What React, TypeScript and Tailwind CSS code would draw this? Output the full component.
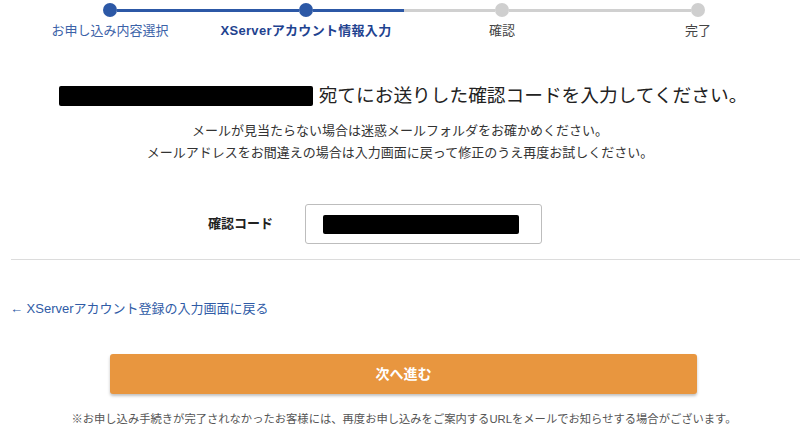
import React from "react";

const font = "font-['Liberation_Sans','Noto_Sans_CJK_JP',sans-serif]";

type Step = { label: string; left: string; right: string; dot: string; text: string };

const steps: Step[] = [
  { label: "お申し込み内容選択", left: "bg-transparent", right: "bg-[#2c58a6]", dot: "bg-[#2c58a6]", text: "text-[#3b62a8]" },
  { label: "XServerアカウント情報入力", left: "bg-[#2c58a6]", right: "bg-[#2c58a6]", dot: "bg-[#2c58a6]", text: "text-[#1f4390] font-bold tracking-[0.3px]" },
  { label: "確認", left: "bg-[#d0d0d0]", right: "bg-[#d0d0d0]", dot: "bg-[#cfcfcf]", text: "text-[#444]" },
  { label: "完了", left: "bg-[#d0d0d0]", right: "bg-transparent", dot: "bg-[#cfcfcf]", text: "text-[#444]" },
];

function Redacted({ className }: { className: string }) {
  return <span className={`inline-block bg-black rounded-[2px] blur-[0.4px] ${className}`} />;
}

export default function App() {
  return (
    <div className={`w-[800px] h-[438px] overflow-hidden bg-white ${font}`}>
      {/* ステップ */}
      <div className="grid grid-cols-4 w-[784px] ml-[12px] pt-[3px]">
        {steps.map((s) => (
          <div key={s.label} className="flex flex-col items-center">
            <div className="flex items-center w-full">
              <div className={`flex-1 h-[3px] ${s.left}`} />
              <div className={`w-[14px] h-[14px] rounded-full ${s.dot}`} />
              <div className={`flex-1 h-[3px] ${s.right}`} />
            </div>
            <div className={`mt-[5px] text-[13px] leading-[18px] whitespace-nowrap ${s.text}`}>{s.label}</div>
          </div>
        ))}
      </div>

      {/* 見出し */}
      <div className="mt-[44px] flex justify-center items-center gap-[6px] pl-[6px]">
        <Redacted className="w-[254px] h-[20px]" />
        <span className="text-[18.7px] leading-[24px] text-[#222]">宛てにお送りした確認コードを入力してください。</span>
      </div>

      <div className="mt-[12px] text-center text-[13px] leading-[22px] text-[#333]">
        <p>メールが見当たらない場合は迷惑メールフォルダをお確かめください。</p>
        <p>メールアドレスをお間違えの場合は入力画面に戻って修正のうえ再度お試しください。</p>
      </div>

      {/* 確認コード */}
      <div className="mt-[40px] flex items-center h-[40px]">
        <div className="w-[275px] pr-[2px] text-right text-[13px] font-bold text-[#222]">確認コード</div>
        <div className="ml-[30px] w-[237px] h-[40px] border border-[#bdbdbd] rounded-[3px] flex items-center pl-[17px]">
          <Redacted className="w-[196px] h-[19px]" />
        </div>
      </div>

      <div className="mt-[15px] ml-[11px] border-t border-[#dcdcdc]" />

      <div className="mt-[40px] pl-[10px] text-[13px] leading-[18px] text-[#2f5ba6]">
        ← XServerアカウント登録の入力画面に戻る
      </div>

      <div className="mt-[36px] flex justify-center">
        <button className="w-[587px] h-[40px] ml-[7px] rounded-[3px] bg-[#e8963f] text-white text-[14px] font-bold shadow-[0_2px_3px_rgba(0,0,0,0.25)]">
          次へ進む
        </button>
      </div>

      <p className="mt-[17px] text-center text-[11.3px] leading-[16px] text-[#555] pl-[8px]">
        ※お申し込み手続きが完了されなかったお客様には、再度お申し込みをご案内するURLをメールでお知らせする場合がございます。
      </p>
    </div>
  );
}
